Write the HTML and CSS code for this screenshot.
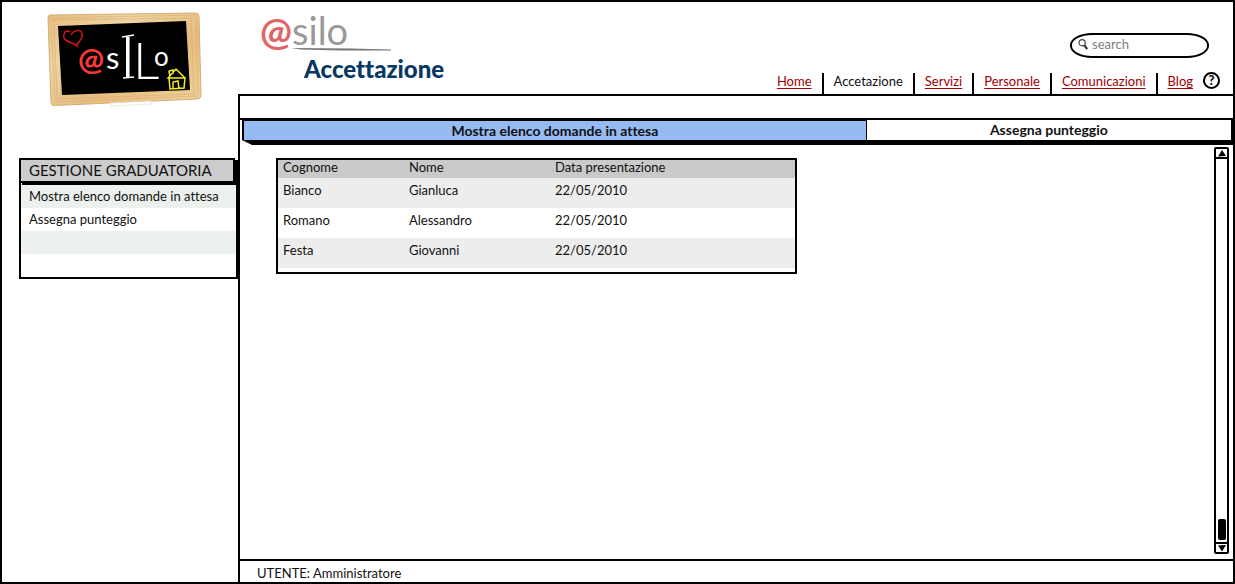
FILE: index.html
```html
<!DOCTYPE html>
<html lang="it">
<head>
<meta charset="utf-8">
<title>@silo - Accettazione</title>
<link rel="stylesheet" href="styles.css">
</head>
<body>
<div class="app">
  <aside class="side">
    <svg class="board" viewBox="0 0 156 95" role="img" aria-label="@sILo">
      <defs>
        <linearGradient id="wood" x1="0" y1="0" x2="1" y2="1">
          <stop offset="0" stop-color="#e6bd80"/><stop offset=".3" stop-color="#f0d4a2"/>
          <stop offset=".6" stop-color="#e6bd80"/><stop offset="1" stop-color="#f0d19c"/>
        </linearGradient>
      </defs>
      <path d="M3 3 Q1 3 1 6 L4 90 Q4 94 8 93.500 L150 87 Q154 87 154 83 L152 4 Q152 1 148 1 Z" fill="url(#wood)" stroke="#d3ae78"/>
      <path d="M3 6 L150 3 M5 8 L148 6 M7 90 L151 84 M9 87 L149 82 M4 12 L8 86 M7 12 L10 86 M144 6 L147 83 M149 6 L151 82" fill="none" stroke="#d3a669" stroke-width=".7" opacity=".7"/>
      <path d="M11 14 L139 9 L143 78 L15 83 Z" fill="#000"/>
      <path d="M23 20 C19 17 16 21 17 26 C18 30 26 30 30 34 C29 30 37 28 35 21 C33 16 26 19 24 23" fill="none" stroke="#e31414" stroke-width="1.400"/>
      <text class="chalk-at" x="31" y="58">@</text>
      <text class="chalk-s" x="59" y="57">s</text>
      <text class="chalk-i" x="73" y="66">I</text>
      <path d="M75 25 L87 23 M76 66 L87 65" stroke="#fff" stroke-width="1.700"/>
      <text class="chalk-l" x="86" y="67">L</text>
      <text class="chalk-o" x="107" y="54">o</text>
      <path d="M122 66 L123 77 L137 76 L138 66 L121 66 L129 57 L138 66 M123 65 L122 59 L126 58 L126 62 M126 77 L126 70 L131 69 L132 77" fill="none" stroke="#f5ec1c" stroke-width="1.500"/>
      <path d="M63 91 L104 89 L105 92 L64 94 Z" fill="#fffefa" stroke="#e6dccb" stroke-width=".6"/>
    </svg>
    <nav class="menu" aria-label="Gestione graduatoria">
      <h2 class="menu-title">GESTIONE GRADUATORIA</h2>
      <ul class="menu-list">
        <li><a href="#elenco">Mostra elenco domande in attesa</a></li>
        <li><a href="#punteggio">Assegna punteggio</a></li>
        <li></li>
        <li></li>
      </ul>
    </nav>
  </aside>
  <div class="page">
    <header class="top">
      <div class="brand">
        <div class="brand-name"><span class="brand-at">@</span>silo</div>
        <svg class="swoosh" viewBox="0 0 100 3" aria-hidden="true"><path d="M0 0 L60 .5 L100 1.500 L100 2.500 L50 2.500 L10 1.500 Z" fill="#777"/></svg>
        <h1 class="brand-page">Accettazione</h1>
      </div>
      <div class="tools">
        <label class="search">
          <svg class="lens" viewBox="0 0 12 13" aria-hidden="true"><circle cx="4.500" cy="4.500" r="3.400" fill="#fff" stroke="#444" stroke-width="1.300"/><path d="M7 7.500 L10 11.500" stroke="#333" stroke-width="2.400"/></svg>
          <input type="search" placeholder="search" aria-label="search">
        </label>
        <div class="links-row">
          <nav class="links" aria-label="Principale">
            <a href="#home">Home</a>
            <a href="#accettazione" class="current" aria-current="page">Accetazione</a>
            <a href="#servizi">Servizi</a>
            <a href="#personale">Personale</a>
            <a href="#comunicazioni">Comunicazioni</a>
            <a href="#blog">Blog</a>
          </nav>
          <button class="help" type="button" aria-label="Aiuto">?</button>
        </div>
      </div>
    </header>
    <main class="main">
      <div class="strip"></div>
      <div class="tabs">
        <button class="tab selected" type="button">Mostra elenco domande in attesa</button>
        <button class="tab" type="button">Assegna punteggio</button>
      </div>
      <section class="content">
        <div class="body">
          <div class="grid">
            <table>
              <colgroup><col class="c1"><col class="c2"><col></colgroup>
              <thead><tr><th>Cognome</th><th>Nome</th><th>Data presentazione</th></tr></thead>
              <tbody>
                <tr><td>Bianco</td><td>Gianluca</td><td>22/05/2010</td></tr>
                <tr><td>Romano</td><td>Alessandro</td><td>22/05/2010</td></tr>
                <tr><td>Festa</td><td>Giovanni</td><td>22/05/2010</td></tr>
              </tbody>
            </table>
          </div>
        </div>
        <div class="scroll">
          <button class="arrow up" type="button" aria-label="Su"><svg viewBox="0 0 8 7"><path d="M4 0 L8 6 L0 6.500 Z"/></svg></button>
          <div class="track"><div class="thumb"></div></div>
          <button class="arrow down" type="button" aria-label="Giù"><svg viewBox="0 0 8 7"><path d="M0 .5 L8 0 L4 6.500 Z"/></svg></button>
        </div>
      </section>
      <footer class="status">UTENTE: Amministratore</footer>
    </main>
  </div>
</div>
</body>
</html>
```
FILE: styles.css
```css
* { box-sizing: border-box; }

body {
  margin: 0;
  background: #fff;
  color: #111;
  font: 13px/18px Lato, "Open Sans", sans-serif;
  font-variant-ligatures: none;
}

.app {
  display: grid;
  grid-template-columns: 236px 1fr;
  min-height: 100vh;
  border: 2px solid #000;
}

button, input { font: inherit; color: inherit; padding: 0; }

/* Sidebar */
.side { padding: 10px 0 0 17px; }
.board { display: block; width: 156px; height: 95px; margin-left: 28px; overflow: visible; }
.chalk-at { font: 700 31px Lato, sans-serif; fill: #ff3838; }
.chalk-s { font: 400 31px Lato, sans-serif; fill: #fff; }
.chalk-i { font: 300 58px Roboto, sans-serif; fill: #fff; }
.chalk-l { font: 300 52px Lato, sans-serif; fill: #fff; }
.chalk-o { font: 400 26px Lato, sans-serif; fill: #fff; }

.menu { margin-top: 51px; }
.menu-title {
  position: relative;
  height: 25px;
  margin: 0 3px 0 0;
  padding-left: 8px;
  border: 2px solid #000;
  background: #ccc;
  box-shadow: 3px 2px 0 #000;
  font-size: 15px;
  font-weight: 400;
  line-height: 21px;
}
.menu-list {
  margin: 0;
  padding: 2px 0 0;
  list-style: none;
  border: 2px solid #000;
  border-top: 0;
}
.menu-list li { height: 23px; padding-left: 8px; line-height: 23px; }
.menu-list li:nth-child(odd) { background: #ecf1ee; }
.menu-list a { color: inherit; text-decoration: none; }

/* Header */
.page { display: flex; flex-direction: column; min-width: 0; }
.top { display: flex; justify-content: space-between; height: 92px; }
.brand { padding: 8px 0 0 22px; }
.brand-name { color: #999; font-size: 38px; line-height: 40px; }
.brand-at { color: #e06666; font-weight: 700; }
.swoosh { display: block; width: 100px; height: 3px; margin: -2px 0 0 31px; }
.brand-page { margin: 3px 0 0 44px; color: #073763; font-size: 24px; font-weight: 900; line-height: 30px; }

.tools { display: flex; flex-direction: column; justify-content: space-between; align-items: flex-end; }
.search {
  display: flex;
  align-items: center;
  gap: 3px;
  width: 139px;
  height: 25px;
  margin: 31px 24px 0 0;
  padding: 0 6px 3px;
  border: 2px solid #000;
  border-radius: 22px / 12px;
}
.lens { width: 11px; height: 13px; flex: none; }
.search input { width: 100%; min-width: 0; border: 0; outline: 0; background: none; appearance: none; }
.search input::placeholder { color: #7d7d85; opacity: 1; }

.links-row { display: flex; padding-right: 13px; }
.links { display: flex; }
.links a { height: 21px; padding: 0 10px; line-height: 16px; color: #a00000; text-underline-offset: 2px; }
.links a + a { border-left: 2px solid #000; }
.links .current { color: #111; text-decoration: none; }
.help {
  width: 17px;
  height: 17px;
  margin-top: -1px;
  border: 2px solid #000;
  border-radius: 50%;
  background: #fff;
  font-weight: 900;
  line-height: 13px;
}

/* Main panel */
.main { flex: 1; display: flex; flex-direction: column; border: solid #000; border-width: 2px 0 0 2px; }
.strip { height: 24px; border-bottom: 2px solid #000; }
.tabs {
  display: flex;
  height: 25px;
  margin-left: 2px;
  padding-right: 2px;
  background: #000;
  clip-path: polygon(0 0, 100% 0, 100% 100%, 10px 100%, 0 20px);
}
.tab {
  flex: 365;
  height: 20px;
  border: solid #000;
  border-width: 0 0 0 1px;
  background: #fff;
  font-size: 14px;
  font-weight: 700;
}
.tab.selected { flex: 623; border-width: 1px 0 0 2px; background: #95bbf2; }

.content { flex: 1; display: flex; }
.body { flex: 1; padding: 13px 0 0 36px; }
.grid { width: 521px; max-width: 100%; padding-bottom: 4px; border: 2px solid #000; }
table { width: 100%; border-collapse: collapse; table-layout: fixed; }
.c1 { width: 126px; }
.c2 { width: 146px; }
th, td { padding: 0 0 0 5px; text-align: left; font-weight: 400; }
th { height: 18px; padding-bottom: 4px; background: #cacaca; line-height: 14px; }
td { height: 30px; padding-bottom: 6px; }
tbody tr:nth-child(odd) { background: #ededed; }

.scroll { display: flex; flex-direction: column; width: 15px; margin: 2px 4px 5px 0; border: 2px solid #000; border-radius: 2px; }
.arrow { display: grid; place-items: center; height: 10px; border: 0; background: #fff; }
.arrow svg { width: 8px; height: 7px; }
.up { border-bottom: 2px solid #000; }
.down { border-top: 2px solid #000; }
.track { flex: 1; display: flex; align-items: flex-end; justify-content: center; padding-bottom: 2px; }
.thumb { width: 8px; height: 21px; border-radius: 2px; background: #000; }

.status { height: 23px; padding: 3px 0 0 17px; border-top: 2px solid #000; }
```
